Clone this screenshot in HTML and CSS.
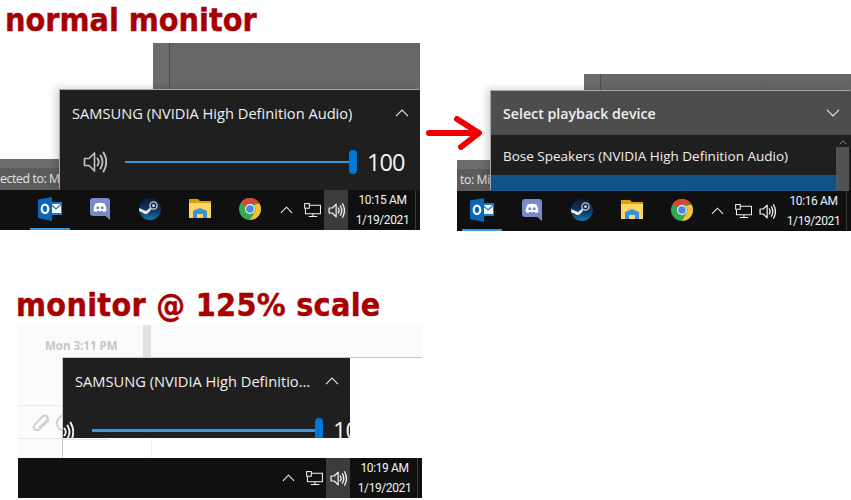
FILE: index.html
```html
<!DOCTYPE html>
<html lang="en">
<head>
<meta charset="utf-8">
<title>Volume flyout comparison</title>
<link rel="stylesheet" href="styles.css">
</head>
<body>
<svg class="sprite" width="0" height="0" aria-hidden="true">
  <defs>
    <linearGradient id="steamfill" x1="0" y1="0" x2="0" y2="1">
      <stop offset="0" stop-color="#0d1b33"/><stop offset=".6" stop-color="#0f3a66"/><stop offset="1" stop-color="#1579ae"/>
    </linearGradient>
    <symbol id="i-vol" viewBox="0 0 24 24">
      <path d="M1.5 8.5H6L11.5 3V21L6 15.500H1.500Z" fill="none" stroke="currentColor" stroke-width="1.700" stroke-linejoin="round"/>
      <path d="M14.500 8.500Q17 12 14.500 15.500M17.500 5.500Q21.500 12 17.500 18.500M20.500 2.500Q26 12 20.500 21.500" fill="none" stroke="currentColor" stroke-width="1.900" stroke-linecap="round"/>
    </symbol>
    <symbol id="i-net" viewBox="0 0 18 16">
      <path d="M5.500 2.500H17.500V11.500H1.500V6.500M9.500 11.500V14.500M5 14.500H14" fill="none" stroke="#f2f2f2" stroke-width="1.100"/>
      <rect x=".6" y=".6" width="5" height="5" fill="#101010" stroke="#f2f2f2" stroke-width="1.100"/>
    </symbol>
    <symbol id="i-outlook" viewBox="0 0 24 24">
      <rect x="8" y="5" width="16" height="13" fill="#1a78c8"/>
      <path d="M13 7H23V16H13Z" fill="#fff"/>
      <path d="M13 7.500L18 12L23 7.500" fill="none" stroke="#1a78c8" stroke-width="1.300"/>
      <path d="M0 2.500L14 0V24L0 21Z" fill="#0a66b8"/>
      <ellipse cx="7" cy="11.800" rx="3.300" ry="4.200" fill="none" stroke="#fff" stroke-width="2.200"/>
    </symbol>
    <symbol id="i-discord" viewBox="0 0 20 22">
      <path d="M3 0H17Q20 0 20 3V22L15.500 18H3Q0 18 0 15V3Q0 0 3 0Z" fill="#7a88cc"/>
      <path d="M5.500 5.500Q10 3.800 14.500 5.500Q16.500 9 16.500 12.500Q15 14 13.500 14L12.800 12.800Q10 13.500 7.200 12.800L6.500 14Q5 14 3.500 12.500Q3.500 9 5.500 5.500Z" fill="#fff"/>
      <circle cx="7.800" cy="9.800" r="1.500" fill="#7a88cc"/><circle cx="12.200" cy="9.800" r="1.500" fill="#7a88cc"/>
    </symbol>
    <symbol id="i-steam" viewBox="0 0 22 22">
      <circle cx="11" cy="11" r="11" fill="url(#steamfill)"/>
      <circle cx="14.500" cy="7.500" r="3.600" fill="none" stroke="#c8ccd0" stroke-width="1.300"/>
      <circle cx="14.500" cy="7.500" r="1.500" fill="#c8ccd0"/>
      <path d="M0 10L7 13L11.500 9.500L12 12L8.500 15.500Q5.500 17 3.500 14.500L.4 13.500Z" fill="#e8e8e8"/>
    </symbol>
    <symbol id="i-folder" viewBox="0 0 22 20">
      <path d="M0 0H9L11 2H22V4H0Z" fill="#dba100"/>
      <path d="M0 4H22V19H0Z" fill="#fdd663"/>
      <path d="M4 12L11 9L18 12V19H14V15H8V19H4Z" fill="#3c91dc"/>
    </symbol>
    <symbol id="i-chrome" viewBox="0 0 22 22">
      <circle cx="11" cy="11" r="11" fill="#34a853"/>
      <path d="M11 0A11 11 0 0 1 20.500 5.500H11A5.500 5.500 0 0 0 6.200 8.300L1.800 5Q5 0 11 0Z" fill="#db4437"/>
      <path d="M20.500 5.500A11 11 0 0 1 11 22L15.800 13.800A5.500 5.500 0 0 0 14.500 7Z" fill="#fbc02d"/>
      <circle cx="11" cy="11" r="5" fill="#f5f5f5"/>
      <circle cx="11" cy="11" r="3.800" fill="#4a86e8"/>
    </symbol>
    <symbol id="i-up" viewBox="0 0 14 8">
      <path d="M1 7.200L7 1L13 7.200" fill="none" stroke="currentColor" stroke-width="1.100"/>
    </symbol>
  </defs>
</svg>

<main class="canvas">
  <h2 class="caption caption-normal">normal monitor</h2>

  <section class="shot shot-normal">
    <div class="window window-normal"></div>
    <div class="status status-normal"><span class="status-text">ected to: Mi</span></div>
    <div class="flyout flyout-normal">
      <div class="fly-head">
        <span class="fly-title">SAMSUNG (NVIDIA High Definition Audio)</span>
        <svg class="chev"><use href="#i-up"/></svg>
      </div>
      <div class="fly-slider">
        <svg class="slider-icon"><use href="#i-vol"/></svg>
        <div class="track"><span class="thumb"></span></div>
        <span class="value">100</span>
      </div>
    </div>
    <div class="taskbar">
      <div class="apps">
        <span class="app active"><svg class="ico"><use href="#i-outlook"/></svg></span>
        <span class="app"><svg class="ico ico-discord"><use href="#i-discord"/></svg></span>
        <span class="app"><svg class="ico ico-round"><use href="#i-steam"/></svg></span>
        <span class="app"><svg class="ico ico-folder"><use href="#i-folder"/></svg></span>
        <span class="app"><svg class="ico ico-round"><use href="#i-chrome"/></svg></span>
      </div>
      <div class="tray">
        <svg class="tray-up"><use href="#i-up"/></svg>
        <svg class="tray-net"><use href="#i-net"/></svg>
        <span class="tray-vol on"><svg><use href="#i-vol"/></svg></span>
        <div class="clock"><span>10:15 AM</span><span>1/19/2021</span></div>
      </div>
    </div>
  </section>

  <svg class="arrow" viewBox="0 0 60 36"><path d="M3 17H50M31 3L53 17L35 31" fill="none" stroke="#f00000" stroke-width="6" stroke-linecap="round" stroke-linejoin="round"/></svg>

  <section class="shot shot-select">
    <div class="window window-select"></div>
    <div class="status status-select"><span class="status-text">to: Mi</span></div>
    <div class="flyout flyout-select">
      <div class="select-head">
        <span class="select-title">Select playback device</span>
        <svg class="chev chev-down"><use href="#i-up"/></svg>
      </div>
      <div class="select-list">
        <div class="device">Bose Speakers (NVIDIA High Definition Audio)</div>
        <div class="device-sel"></div>
        <div class="scrollbar"><svg class="scroll-up"><use href="#i-up"/></svg><span class="scroll-thumb"></span></div>
      </div>
    </div>
    <div class="taskbar">
      <div class="apps">
        <span class="app active"><svg class="ico"><use href="#i-outlook"/></svg></span>
        <span class="app"><svg class="ico ico-discord"><use href="#i-discord"/></svg></span>
        <span class="app"><svg class="ico ico-round"><use href="#i-steam"/></svg></span>
        <span class="app"><svg class="ico ico-folder"><use href="#i-folder"/></svg></span>
        <span class="app"><svg class="ico ico-round"><use href="#i-chrome"/></svg></span>
      </div>
      <div class="tray">
        <svg class="tray-up"><use href="#i-up"/></svg>
        <svg class="tray-net"><use href="#i-net"/></svg>
        <span class="tray-vol"><svg><use href="#i-vol"/></svg></span>
        <div class="clock"><span>10:16 AM</span><span>1/19/2021</span></div>
      </div>
    </div>
  </section>

  <h2 class="caption caption-scaled">monitor @ 125% scale</h2>

  <section class="shot shot-scaled">
    <div class="chat">
      <span class="chat-time">Mon 3:11 PM</span>
      <div class="chat-side"></div>
      <div class="chat-input">
        <svg class="clip" viewBox="0 0 18 18"><path d="M15.500 7L7.500 14.500Q5 16.500 3 14.500Q1.500 12.500 3.500 10.500L10.500 3Q12.500 1.500 14.500 3Q16 5 14 7L7.500 13" fill="none" stroke="#cfcfcf" stroke-width="1.800" stroke-linecap="round"/></svg>
        <span class="smile"></span>
      </div>
    </div>
    <div class="fly-edge"></div>
    <div class="flyout flyout-scaled">
      <div class="fly-head">
        <span class="fly-title">SAMSUNG (NVIDIA High Definition Audio)</span>
        <svg class="chev"><use href="#i-up"/></svg>
      </div>
      <div class="fly-slider">
        <svg class="slider-icon"><use href="#i-vol"/></svg>
        <div class="track"><span class="thumb"></span></div>
        <span class="value">100</span>
      </div>
    </div>
    <div class="taskbar">
      <div class="tray">
        <svg class="tray-up"><use href="#i-up"/></svg>
        <svg class="tray-net"><use href="#i-net"/></svg>
        <span class="tray-vol on"><svg><use href="#i-vol"/></svg></span>
        <div class="clock"><span>10:19 AM</span><span>1/19/2021</span></div>
      </div>
    </div>
  </section>
</main>
</body>
</html>
```

FILE: styles.css
```css
* { box-sizing: border-box; }
html, body { margin: 0; padding: 0; background: #fff; }
.sprite { position: absolute; }
.canvas { position: relative; width: 851px; height: 500px; overflow: hidden; font-family: "Open Sans", "Noto Sans", sans-serif; }

.caption { position: absolute; margin: 0; font-family: "DejaVu Sans", sans-serif; font-weight: 700; font-stretch: condensed; font-size: 32px; line-height: 40px; color: #a80000; -webkit-text-stroke: .4px #a80000; white-space: nowrap; }
.caption-normal { left: 5px; top: 0; }
.caption-scaled { left: 16px; top: 285px; letter-spacing: .3px; }

.arrow { position: absolute; left: 426px; top: 116px; width: 60px; height: 36px; }

.shot { position: absolute; display: flex; flex-direction: column; overflow: hidden; }
.shot-normal { left: 0; top: 43px; width: 420px; height: 187px; }
.shot-select { left: 457px; top: 74px; width: 394px; height: 157px; }
.shot-scaled { left: 18px; top: 325px; width: 404px; height: 173px; background: #fbfbfb; }

.window { position: absolute; top: 0; bottom: 40px; right: 0; background: linear-gradient(#666, #707070); border-left: 17px solid #6c6c6c; }
.window::before { content: ""; position: absolute; left: -1px; top: 0; bottom: 0; width: 1px; background: #4e4e4e; }
.window-normal { left: 153px; }
.window-select { left: 127px; }

.status { position: absolute; left: 0; bottom: 40px; height: 31px; background: #5c5c5c; border-top: 9px solid #6c6c6c; color: #e4e4e4; font-size: 12.300px; letter-spacing: -.4px; line-height: 22px; overflow: hidden; white-space: nowrap; }
.status-normal { width: 60px; }
.status-select { width: 34px; height: 31px; padding-left: 3px; }

.flyout { position: absolute; color: #f0f0f0; background: #1f1f1f; box-shadow: -1px -1px 0 #a8a8a8, -4px -2px 8px rgba(0,0,0,.18); overflow: hidden; }
.flyout-normal { left: 60px; top: 47px; width: 360px; height: 100px; }
.flyout-select { left: 34px; top: 17px; width: 360px; height: 100px; display: flex; flex-direction: column; }
.flyout-scaled { left: 45px; top: 33px; width: 287px; height: 80px; }

.fly-head { display: flex; align-items: center; justify-content: space-between; height: 45px; padding: 0 11px 0 12px; }
.fly-title { font-size: 14.650px; white-space: nowrap; overflow: hidden; text-overflow: ellipsis; }
.chev { width: 14px; height: 8px; flex: none; color: #e8e8e8; }

.fly-slider { display: flex; align-items: center; height: 54px; padding-left: 23px; }
.slider-icon { width: 24px; height: 24px; flex: none; color: #bdbdbd; }
.track { position: relative; width: 225px; height: 2.500px; margin-left: 18px; background: #3a96dd; flex: none; }
.thumb { position: absolute; right: -7px; top: -11px; width: 8px; height: 24px; border-radius: 4px; background: #0078d7; }
.value { margin-left: 17px; font-size: 23.500px; line-height: 24px; letter-spacing: -.9px; color: #f5f5f5; }

.select-head { display: flex; align-items: center; justify-content: space-between; height: 44px; padding: 0 11px 0 12px; background: #4d4d4d; }
.select-title { font-size: 14.200px; font-weight: 600; color: #f0f0f0; }
.chev-down { transform: scaleY(-1); }
.select-list { position: relative; flex: 1; }
.device { padding: 10px 12px 0; height: 40px; font-size: 13.500px; line-height: 22px; white-space: nowrap; }
.device-sel { height: 16px; margin-right: 12px; background: #0f5389; }
.scrollbar { position: absolute; right: 2px; top: 0; bottom: 0; width: 13px; display: flex; flex-direction: column; align-items: center; }
.scroll-up { width: 8px; height: 5px; margin-top: 5px; color: #d0d0d0; flex: none; }
.scroll-thumb { width: 100%; flex: 1; margin-top: 2px; background: rgba(90,90,90,.85); }

.taskbar { margin-top: auto; position: relative; display: flex; justify-content: space-between; height: 40px; background: #101010; flex: none; }
.apps { display: flex; }
.shot-normal .apps { padding-left: 25px; }
.app { width: 50px; display: flex; align-items: center; justify-content: center; position: relative; padding-bottom: 2px; }
.app.active::after { content: ""; position: absolute; left: 5px; right: 5px; bottom: 0; height: 2px; background: #3a96dd; }
.ico { width: 24px; height: 24px; }
.ico-round { width: 22px; height: 22px; }
.ico-discord { width: 20px; height: 22px; }
.ico-folder { width: 22px; height: 20px; }

.tray { display: flex; align-items: center; margin-left: auto; padding-right: 4px; color: #f2f2f2; }
.tray-up { width: 13px; height: 8px; margin-right: 11px; }
.tray-net { width: 17px; height: 15px; margin-right: 3px; }
.tray-vol { width: 24px; height: 40px; display: flex; align-items: center; justify-content: center; }
.tray-vol svg { width: 17px; height: 17px; }
.tray-vol.on { background: #3c3c3c; }
.clock { width: 68px; height: 40px; display: flex; flex-direction: column; justify-content: space-around; align-items: center; padding-left: 2px; font-family: Roboto, "Open Sans", sans-serif; font-size: 12px; line-height: 16px; letter-spacing: -.4px; color: #eef4fa; border-right: 1px solid #3a3a3a; white-space: nowrap; }

.chat { position: absolute; left: 0; top: 0; right: 0; bottom: 40px; }
.chat-time { position: absolute; left: 27px; top: 13px; font-size: 11.500px; font-weight: 700; color: #c6c6c6; white-space: nowrap; }
.chat-side { position: absolute; left: 125px; top: 0; bottom: 0; width: 8px; background: #e2e2e2; border-bottom: 100px solid #f6f6f6; }
.chat-input { position: absolute; left: 0; top: 80px; width: 92px; height: 34px; border-top: 1px solid #e8e8e8; border-bottom: 1px solid #e8e8e8; }
.clip { position: absolute; left: 13px; top: 7px; width: 20px; height: 20px; }
.smile { position: absolute; left: 38px; top: 8px; width: 18px; height: 18px; border: 2px solid #d0d0d0; border-radius: 50%; }
.fly-edge { position: absolute; left: 45px; top: 32px; right: 0; bottom: 40px; border-top: 1px solid #c8c8c8; border-left: 1px solid #c8c8c8; margin-left: -1px; background: #fff; }
.fly-edge::before { content: ""; position: absolute; left: 0; top: 81px; width: 47px; height: 1px; background: #e8e8e8; }
.fly-edge::after { content: ""; position: absolute; left: 88px; top: 81px; bottom: 0; width: 1px; background: #f0f0f0; }
.flyout-scaled { box-shadow: none; }
.flyout-scaled .fly-head { height: 46px; }
.flyout-scaled .fly-title { max-width: 237px; }
.flyout-scaled .fly-slider { padding-left: 0; height: 34px; align-items: flex-start; padding-top: 25px; overflow: hidden; }
.flyout-scaled .slider-icon { margin-left: -13px; margin-top: -9px; color: #f0f0f0; }
.flyout-scaled .track { width: 224px; margin-left: 18px; }
.flyout-scaled .value { margin-top: -11px; }
```
